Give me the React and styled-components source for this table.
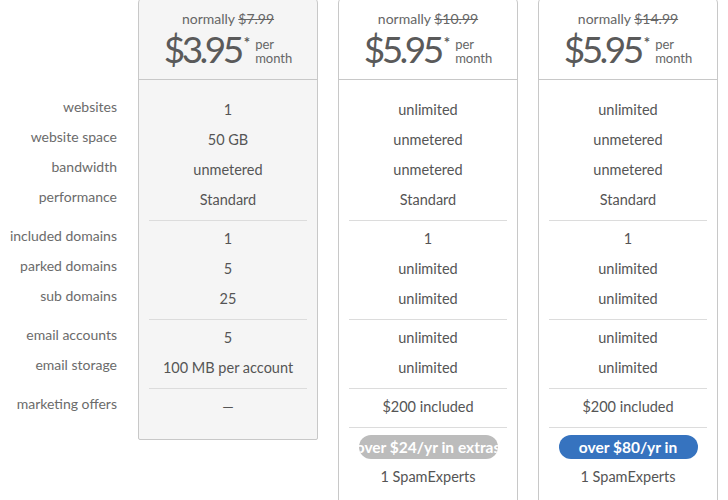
import React from "react";
import styled, { createGlobalStyle } from "styled-components";

const GlobalStyle = createGlobalStyle`
  html, body {
    margin: 0;
    padding: 0;
    background: #fff;
    overflow: hidden;
  }
  body {
    font-family: Lato, "Open Sans", sans-serif;
    color: #555;
  }
`;

const labelGroups = [
  ["websites", "website space", "bandwidth", "performance"],
  ["included domains", "parked domains", "sub domains"],
  ["email accounts", "email storage"],
  ["marketing offers"]
];

const plans = [
  {
    normal: "$7.99",
    price: "$3.95",
    muted: true,
    groups: [
      ["1", "50 GB", "unmetered", "Standard"],
      ["1", "5", "25"],
      ["5", "100 MB per account"],
      ["—"]
    ]
  },
  {
    normal: "$10.99",
    price: "$5.95",
    groups: [
      ["unlimited", "unmetered", "unmetered", "Standard"],
      ["1", "unlimited", "unlimited"],
      ["unlimited", "unlimited"],
      ["$200 included"]
    ],
    extras: { text: "over $24/yr in extras", tone: "gray" },
    spam: "1 SpamExperts"
  },
  {
    normal: "$14.99",
    price: "$5.95",
    groups: [
      ["unlimited", "unmetered", "unmetered", "Standard"],
      ["1", "unlimited", "unlimited"],
      ["unlimited", "unlimited"],
      ["$200 included"]
    ],
    extras: { text: "over $80/yr in extras", tone: "blue" },
    spam: "1 SpamExperts"
  }
];

export default function App() {
  return (
    <>
      <GlobalStyle />
      <Table>
        <LabelColumn>
          {labelGroups.map((group, i) => (
            <LabelGroup key={i}>
              {group.map((label) => (
                <Label key={label}>{label}</Label>
              ))}
            </LabelGroup>
          ))}
        </LabelColumn>

        {plans.map((plan, i) => (
          <Card key={i} $muted={plan.muted}>
            <CardHeader>
              <Normally>
                normally <s>{plan.normal}</s>
              </Normally>
              <PriceRow>
                <Price>{plan.price}</Price>
                <Star>*</Star>
                <PerMonth>
                  per
                  <br />
                  month
                </PerMonth>
              </PriceRow>
            </CardHeader>
            <CardBody>
              {plan.groups.map((group, g) => (
                <React.Fragment key={g}>
                  {g > 0 && <Divider />}
                  {group.map((value, v) => (
                    <Value key={v}>{value}</Value>
                  ))}
                </React.Fragment>
              ))}
              {plan.extras && (
                <>
                  <Divider />
                  <PillRow>
                    <Pill $tone={plan.extras.tone}>
                      <span>{plan.extras.text}</span>
                    </Pill>
                  </PillRow>
                  <Value>{plan.spam}</Value>
                </>
              )}
            </CardBody>
          </Card>
        ))}
      </Table>
    </>
  );
}

const Table = styled.div`
  display: grid;
  grid-template-columns: 118px repeat(3, 180px);
  column-gap: 20px;
  align-items: start;
  margin-top: -3px;
`;

const LabelColumn = styled.div`
  padding-top: 95px;
  padding-right: 1px;
  display: flex;
  flex-direction: column;
  gap: 9px;
`;

const LabelGroup = styled.div`
  display: flex;
  flex-direction: column;
`;

const Label = styled.div`
  height: 30px;
  line-height: 30px;
  text-align: right;
  font-size: 14px;
  color: #6b6b6b;
  white-space: nowrap;
`;

const Card = styled.div`
  box-sizing: border-box;
  width: 180px;
  border: 1px solid #c8c8c8;
  border-radius: 6px 6px 2px 2px;
  background: ${(p) => (p.$muted ? "#f5f5f5" : "#fff")};
  padding-bottom: ${(p) => (p.$muted ? "17px" : "20px")};
`;

const CardHeader = styled.div`
  height: 82px;
  box-sizing: border-box;
  border-bottom: 1px solid #c8c8c8;
  display: flex;
  flex-direction: column;
  align-items: center;
  padding-top: 13px;
`;

const Normally = styled.div`
  font-size: 14px;
  line-height: 16px;
  color: #666;
  s {
    text-decoration-thickness: 1px;
  }
`;

const PriceRow = styled.div`
  display: flex;
  align-items: flex-start;
  margin-top: 0;
`;

const Price = styled.span`
  font-size: 37px;
  line-height: 44px;
  letter-spacing: -3.5px;
  color: #5a5a5a;
`;

const Star = styled.span`
  font-size: 15px;
  font-weight: 700;
  line-height: 20px;
  margin-top: 5px;
  margin-left: 3px;
  color: #5a5a5a;
`;

const PerMonth = styled.span`
  font-size: 13px;
  line-height: 14px;
  color: #666;
  margin-top: 10px;
  margin-left: 5px;
`;

const CardBody = styled.div`
  padding-top: 15px;
  display: flex;
  flex-direction: column;
`;

const Value = styled.div`
  height: 30px;
  line-height: 30px;
  text-align: center;
  font-size: 14.5px;
  color: #555;
  white-space: nowrap;
`;

const Divider = styled.div`
  height: 1px;
  background: #dcdcdc;
  margin: 5px 10px 3px;
`;

const PillRow = styled.div`
  display: flex;
  justify-content: center;
  padding: 4px 0 3px;
`;

const Pill = styled.div`
  width: 139px;
  height: 24px;
  line-height: 24px;
  border-radius: 12px;
  overflow: hidden;
  display: flex;
  justify-content: center;
  font-size: 15.5px;
  font-weight: 700;
  color: #fff;
  background: ${(p) => (p.$tone === "blue" ? "#3673bf" : "#bcbcbc")};
  span {
    flex: none;
    text-align: center;
    white-space: ${(p) => (p.$tone === "blue" ? "normal" : "nowrap")};
    width: ${(p) => (p.$tone === "blue" ? "130px" : "auto")};
  }
`;
